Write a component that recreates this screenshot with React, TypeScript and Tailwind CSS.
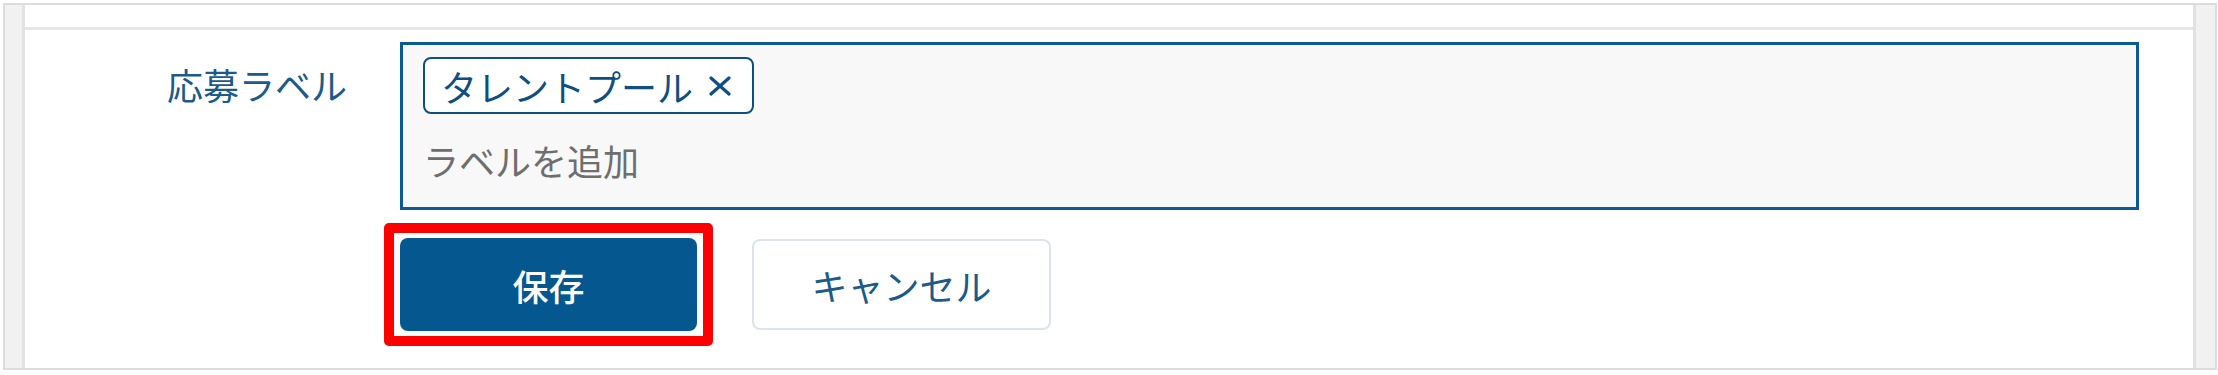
import React from 'react';

const font = { fontFamily: '"Noto Sans CJK JP", "Noto Sans", sans-serif' };

const CloseIcon = () => (
  <svg width="24" height="20" viewBox="0 0 24 20" className="shrink-0">
    <path d="M3 2 L21 18 M21 2 L3 18" stroke="#0f4f80" strokeWidth="3.2" strokeLinecap="round" />
  </svg>
);

const App = () => (
  <div className="w-[2218px] h-[375px] bg-white pt-[3px] pl-[3px]" style={font}>
    <div className="w-[2214px] h-[367px] border-2 border-[#dcdcdc] flex">
      <div className="w-[20px] bg-[#f1f1f1] border-r-[3px] border-[#e2e2e2]" />
      <div className="flex-1 flex flex-col">
        <div className="h-[25px] border-b-[3px] border-[#e6e6e6]" />
        <div className="flex pt-[12px]">
          <div className="w-[375px] pr-[53px] pt-[14px] text-right text-[36px] leading-[56px] text-[#1b5a8a]">
            応募ラベル
          </div>
          <div className="flex-1 mr-[54px] h-[168px] border-[3px] border-[#0b5a92] bg-[#f8f8f8] px-[20px] pt-[12px]">
            <div className="inline-flex items-center h-[57px] border-[2.5px] border-[#0f4f80] rounded-[8px] bg-white pl-[16px] pr-[20px] gap-[15px]">
              <span className="text-[36px] leading-none text-[#0f4f80]">タレントプール</span>
              <CloseIcon />
            </div>
            <div className="mt-[18px] text-[36px] leading-[56px] text-[#6e6e6e]">ラベルを追加</div>
          </div>
        </div>
        <div className="flex items-center mt-[28px] ml-[375px] gap-[55px]">
          <div className="relative">
            <button className="w-[297px] h-[93px] rounded-[8px] bg-[#05588f] text-white text-[36px] font-medium">
              保存
            </button>
            <span className="absolute -inset-x-[16px] -inset-y-[15px] border-[10px] border-[#ff0000] rounded-[5px] pointer-events-none" />
          </div>
          <button className="w-[299px] h-[91px] rounded-[8px] border-2 border-[#dbe4ec] bg-white text-[#1b5a8a] text-[36px]">
            キャンセル
          </button>
        </div>
      </div>
      <div className="w-[22px] bg-[#f1f1f1] border-l-[3px] border-[#e2e2e2]" />
    </div>
  </div>
);

export default App;
